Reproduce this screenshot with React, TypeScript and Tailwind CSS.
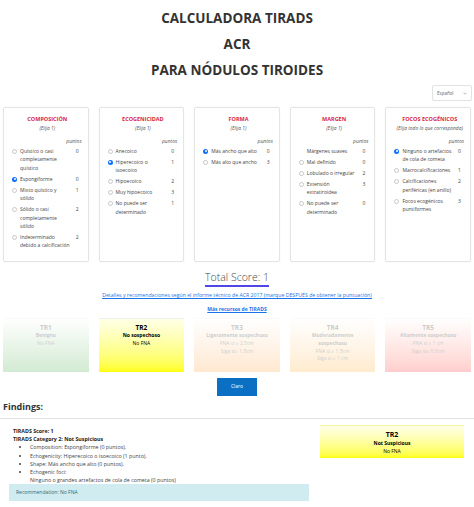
import React from "react";

type Opt = { label: string; pts: number; checked?: boolean; noRadio?: boolean };

const groups: { title: string; hint: string; options: Opt[] }[] = [
  {
    title: "COMPOSICIÓN",
    hint: "(Elija 1)",
    options: [
      { label: "Quístico o casi completamente quístico", pts: 0 },
      { label: "Espongiforme", pts: 0, checked: true },
      { label: "Mixto quístico y sólido", pts: 1 },
      { label: "Sólido o casi completamente sólido", pts: 2 },
      { label: "Indeterminado debido a calcificación", pts: 2 },
    ],
  },
  {
    title: "ECOGENICIDAD",
    hint: "(Elija 1)",
    options: [
      { label: "Anecoico", pts: 0 },
      { label: "Hiperecoico o isoecoico", pts: 1, checked: true },
      { label: "Hipoecoico", pts: 2 },
      { label: "Muy hipoecoico", pts: 3 },
      { label: "No puede ser determinado", pts: 1 },
    ],
  },
  {
    title: "FORMA",
    hint: "(Elija 1)",
    options: [
      { label: "Más ancho que alto", pts: 0, checked: true },
      { label: "Más alto que ancho", pts: 3 },
    ],
  },
  {
    title: "MARGEN",
    hint: "(Elija 1)",
    options: [
      { label: "Márgenes suaves", pts: 0, noRadio: true },
      { label: "Mal definido", pts: 0 },
      { label: "Lobulado o irregular", pts: 2 },
      { label: "Extensión extratiroidea", pts: 3 },
      { label: "No puede ser determinado", pts: 0 },
    ],
  },
  {
    title: "FOCOS ECOGÉNICOS",
    hint: "(Elija todo lo que corresponda)",
    options: [
      { label: "Ninguno o artefactos de cola de cometa", pts: 0, checked: true },
      { label: "Macrocalcificaciones", pts: 1 },
      { label: "Calcificaciones periféricas (en anillo)", pts: 2 },
      { label: "Focos ecogénicos puntiformes", pts: 3 },
    ],
  },
];

const levels = [
  { tr: "TR1", name: "Benigno", lines: ["No FNA"], bg: "bg-gradient-to-b from-white to-[#4caf50]", active: false },
  { tr: "TR2", name: "No sospechoso", lines: ["No FNA"], bg: "bg-gradient-to-b from-[#ffffe6] to-[#ffff00]", active: true },
  { tr: "TR3", name: "Ligeramente sospechoso", lines: ["FNA si ≥ 2.5cm", "Siga si≥ 1.5cm"], bg: "bg-gradient-to-b from-white to-[#ffa640]", active: false },
  { tr: "TR4", name: "Moderadamente sospechoso", lines: ["FNA si ≥ 1.5cm", "Siga si ≥ 1 cm"], bg: "bg-gradient-to-b from-white to-[#ffb23a]", active: false },
  { tr: "TR5", name: "Altamente sospechoso", lines: ["FNA si ≥ 1 cm", "Siga si≥ 0.5cm"], bg: "bg-gradient-to-b from-white to-[#ff3b3b]", active: false },
];

function Radio({ checked }: { checked?: boolean }) {
  if (checked) {
    return (
      <span className="mt-[1.7px] flex h-[5px] w-[5px] shrink-0 items-center justify-center rounded-full bg-[#0d6efd]">
        <span className="h-[2px] w-[2px] rounded-full bg-white" />
      </span>
    );
  }
  return <span className="mt-[1.7px] h-[5px] w-[5px] shrink-0 rounded-full border-[0.5px] border-[#c8c8c8] bg-white" />;
}

export default function App() {
  return (
    <div className="w-[474px] bg-white pb-[6px] font-['Open_Sans',sans-serif] text-[#333]">
      {/* heading */}
      <div className="pt-[5px] text-center text-[13.5px] font-bold leading-[26px] text-[#333]">
        <div>CALCULADORA TIRADS</div>
        <div>ACR</div>
        <div>PARA NÓDULOS TIROIDES</div>
      </div>

      <div className="mt-[2px] flex justify-end pr-[2px]">
        <div className="flex h-[16px] w-[40px] items-center justify-between rounded-[2px] border-[0.5px] border-[#e2e2e2] px-[4px] text-[4.5px] text-[#666]">
          <span>Español</span>
          <svg width="4" height="3" viewBox="0 0 4 3">
            <path d="M0.5 0.7 L2 2.2 L3.5 0.7" fill="none" stroke="#888" strokeWidth="0.6" />
          </svg>
        </div>
      </div>

      {/* criteria cards */}
      <div className="mt-[6px] grid grid-cols-5 gap-[10px] px-[3px]">
        {groups.map((g) => (
          <div key={g.title} className="h-[155px] rounded-[2px] border-[0.5px] border-[#e4e4e4] pl-[8px] pr-[5px] pt-[7px] shadow-[0_0_2px_rgba(0,0,0,0.06)]">
            <div className="text-center text-[5.5px] font-bold leading-[8px] text-[#d6263f]">{g.title}</div>
            <div className="text-center text-[4.9px] italic leading-[10px] text-[#555]">{g.hint}</div>
            <div className="mt-[4px] pr-[1px] text-right text-[5px] italic leading-[8px] text-[#555]">puntos</div>
            <div className="mt-[2px] flex flex-col gap-[2.6px]">
              {g.options.map((o) => (
                <div key={o.label} className="flex items-start text-[5px] leading-[8.4px] text-[#444]">
                  {o.noRadio ? <span className="w-[5px] shrink-0" /> : <Radio checked={o.checked} />}
                  <span className="ml-[3px] flex-1">{o.label}</span>
                  <span className="w-[11px] shrink-0 text-center">{o.pts}</span>
                </div>
              ))}
            </div>
          </div>
        ))}
      </div>

      {/* score */}
      <div className="mt-[7px] flex justify-center">
        <div className="border-b-2 border-[#4f46e5] text-[10.5px] font-light leading-[16px] text-[#444]">Total Score: 1</div>
      </div>
      <div className="mt-[4px] text-center text-[5.2px] leading-[8px]">
        <a className="text-[#1a73e8] underline">
          Detalles y recomendaciones según el informe técnico de ACR 2017 (marque DESPUÉS de obtener la puntuación)
        </a>
      </div>
      <div className="mt-[6px] text-center text-[5px] font-bold leading-[8px]">
        <a className="text-[#1a73e8] underline">Más recursos de TIRADS</a>
      </div>

      {/* level boxes */}
      <div className="mt-[5px] grid grid-cols-5 gap-[10px] px-[3px]">
        {levels.map((l) => (
          <div
            key={l.tr}
            className={`h-[54px] border-t-[0.5px] border-[#eee] pt-[5px] text-center text-[5px] leading-[7.8px] ${l.bg} ${l.active ? "text-black" : "opacity-25"}`}
          >
            <div className="text-[6.5px] font-bold leading-[8px]">{l.tr}</div>
            <div className="px-[8px] font-bold">{l.name}</div>
            {l.lines.map((x) => (
              <div key={x}>{x}</div>
            ))}
          </div>
        ))}
      </div>

      <div className="mt-[6px] flex justify-center">
        <button className="h-[18px] w-[40px] bg-[#0b6fc4] text-[5px] text-white">Claro</button>
      </div>

      {/* findings */}
      <div className="mt-[5px] pl-[3px] text-[9px] font-bold leading-[12px] text-[#333]">Findings:</div>
      <div className="mt-[5px] border-t-[0.5px] border-[#e2e2e2]" />

      <div className="mt-[6px] flex pl-[9px]">
        <div className="w-[300px]">
          <div className="pl-[4px] pt-[2px] text-[5.3px] leading-[8.2px] text-[#222]">
            <div className="font-bold">TIRADS Score: 1</div>
            <div className="font-bold">TIRADS Category 2: Not Suspicious</div>
            <ul className="list-disc pl-[17px] text-[#444]">
              <li>Composition: Espongiforme (0 puntos).</li>
              <li>Echogenicity: Hiperecoico o isoecoico (1 punto).</li>
              <li>Shape: Más ancho que alto (0 puntos).</li>
              <li>
                Echogenic foci:
                <br />
                Ninguno o grandes artefactos de cola de cometa (0 puntos)
              </li>
            </ul>
          </div>
          <div className="flex h-[17px] items-center bg-[#d1ecf1] pl-[7px] text-[5px] text-[#2c6b78]">
            Recommendation: No FNA
          </div>
        </div>
        <div className="ml-[11px] w-[144px]">
          <div className="h-[33px] border-t-[0.5px] border-[#f3f3a0] bg-gradient-to-b from-[#ffffe8] to-[#ffff00] pt-[5px] text-center text-[5px] leading-[8px] text-black">
            <div className="text-[7px] font-bold leading-[8px]">TR2</div>
            <div className="font-bold">Not Suspicious</div>
            <div>No FNA</div>
          </div>
        </div>
      </div>
    </div>
  );
}
